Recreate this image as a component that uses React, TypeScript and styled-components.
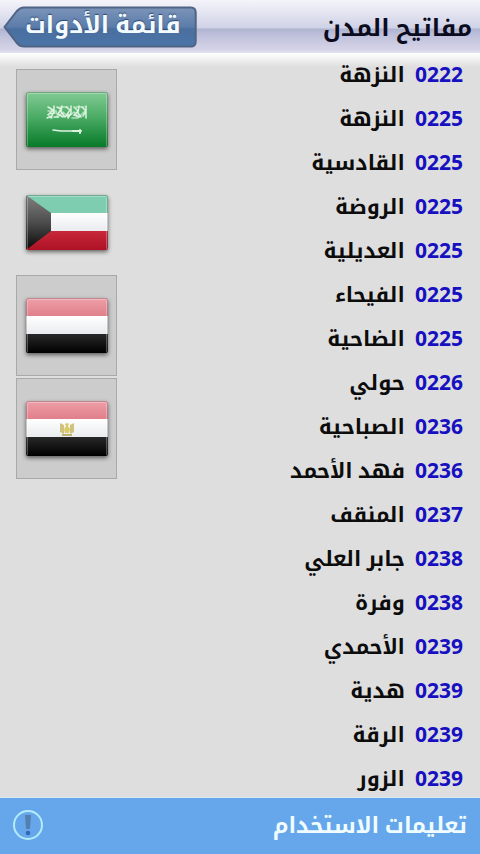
import React, { useId, useState } from "react";
import styled, { createGlobalStyle } from "styled-components";

const GlobalStyle = createGlobalStyle`
  * { box-sizing: border-box; }
  body {
    margin: 0;
    background: #dedede;
    font-family: "Noto Sans", "Noto Kufi Arabic", "DejaVu Sans", sans-serif;
    font-weight: 700;
  }
`;

const Screen = styled.div`
  display: flex;
  flex-direction: column;
  height: 100vh;
`;

const Header = styled.header`
  flex: none;
  display: flex;
  align-items: center;
  justify-content: space-between;
  height: 53px;
  padding: 0 8px 0 3px;
  direction: ltr;
  background: linear-gradient(#f4f4fa 0, #e2e3f0 14px, #cfd1e6 28px, #aeb3cf 29px, #bcbeda 34px, #d6d4e8 50px, #e4e2f0 53px);
`;

const Title = styled.h1`
  margin: 0;
  font-size: 24px;
  line-height: 52px;
  color: #0b0b20;
`;

const BackButton = styled.button`
  position: relative;
  height: 42px;
  padding: 0 16px 6px 22px;
  border: 0;
  background: none;
  font: inherit;
  font-size: 24px;
  line-height: 36px;
  color: #f4fbff;
  text-shadow: 0 -1px 1px #2c466f;
  cursor: pointer;
`;

const BackShape = styled.svg`
  position: absolute;
  inset: 0;
  width: 100%;
  height: 100%;
`;

const BackLabel = styled.span`
  position: relative;
`;

const Content = styled.main`
  flex: 1;
  min-height: 0;
  display: flex;
  justify-content: space-between;
  direction: ltr;
  overflow: hidden;
  background: linear-gradient(#ffffff 0, #f6f6f6 4px, #dedede 14px);
`;

const Countries = styled.nav`
  display: flex;
  flex-direction: column;
  gap: 2px;
  padding: 16px;
`;

const CountryButton = styled.button<{ $selected: boolean }>`
  display: grid;
  place-items: center;
  width: 101px;
  height: 101px;
  padding: 0;
  border: 1px solid ${(p) => (p.$selected ? "transparent" : "#a9a9a9")};
  background: ${(p) => (p.$selected ? "transparent" : "#cccccc")};
  cursor: pointer;
`;

const FlagDrawing = styled.svg`
  display: block;
  width: 82px;
  height: 55px;
  border-radius: 2px;
  box-shadow: 0 2px 4px rgba(0, 0, 0, 0.55);
`;

const CityList = styled.ul`
  flex: 1;
  margin: 0;
  padding: 0 17px 0 0;
  list-style: none;
  direction: rtl;
  overflow-y: auto;
  scrollbar-width: none;
`;

const CityRow = styled.li`
  display: flex;
  gap: 10px;
  height: 44px;
  font-size: 21px;
  line-height: 42px;
  white-space: nowrap;
`;

const Code = styled.span`
  color: #1610c0;
`;

const City = styled.span`
  color: #0c0c0c;
`;

const Footer = styled.footer`
  flex: none;
  display: flex;
  align-items: center;
  justify-content: space-between;
  height: 57px;
  padding: 0 13px;
  direction: ltr;
  background: #65a7ea;
  border-top: 1px solid #d8e8f4;
`;

const FooterLink = styled.a`
  padding-bottom: 4px;
  color: #f0fcff;
  font-size: 22px;
  line-height: 52px;
  text-decoration: none;
`;

const InfoButton = styled.button`
  display: block;
  padding: 0;
  border: 0;
  background: none;
  cursor: pointer;
`;

type Country = "sa" | "kw" | "ye" | "eg";

const countries: { id: Country; name: string }[] = [
  { id: "sa", name: "السعودية" },
  { id: "kw", name: "الكويت" },
  { id: "ye", name: "اليمن" },
  { id: "eg", name: "مصر" },
];

const cities: [string, string][] = [
  ["0222", "النزهة"],
  ["0225", "النزهة"],
  ["0225", "القادسية"],
  ["0225", "الروضة"],
  ["0225", "العديلية"],
  ["0225", "الفيحاء"],
  ["0225", "الضاحية"],
  ["0226", "حولي"],
  ["0236", "الصباحية"],
  ["0236", "فهد الأحمد"],
  ["0237", "المنقف"],
  ["0238", "جابر العلي"],
  ["0238", "وفرة"],
  ["0239", "الأحمدي"],
  ["0239", "هدية"],
  ["0239", "الرقة"],
  ["0239", "الزور"],
];

function Flag({ country }: { country: Country }) {
  const id = useId();
  const url = (name: string) => `url(#${id}${name})`;
  return (
    <FlagDrawing viewBox="0 0 82 55" aria-hidden="true">
      <defs>
        <linearGradient id={id + "green"} x2="0" y2="1">
          <stop offset="0" stopColor="#82cb94" />
          <stop offset=".45" stopColor="#4cac66" />
          <stop offset="1" stopColor="#077a28" />
        </linearGradient>
        <linearGradient id={id + "white"} x2="0" y2="1">
          <stop offset="0" stopColor="#ffffff" />
          <stop offset="1" stopColor="#e9ebee" />
        </linearGradient>
        <linearGradient id={id + "pink"} x2="0" y2="1">
          <stop offset="0" stopColor="#eda0a8" />
          <stop offset="1" stopColor="#e07f8b" />
        </linearGradient>
        <linearGradient id={id + "black"} x2="0" y2="1">
          <stop offset="0" stopColor="#282828" />
          <stop offset="1" stopColor="#000000" />
        </linearGradient>
        <linearGradient id={id + "hoist"} x2="0" y2="1">
          <stop offset="0" stopColor="#808080" />
          <stop offset=".5" stopColor="#4c4c4c" />
          <stop offset="1" stopColor="#080808" />
        </linearGradient>
        <linearGradient id={id + "red"} x2="0" y2="1">
          <stop offset="0" stopColor="#c8283a" />
          <stop offset="1" stopColor="#ad1224" />
        </linearGradient>
      </defs>
      {country === "sa" && (
        <>
          <path d="M0 0H82V55H0Z" fill={url("green")} />
          <g fill="none" stroke="#dcf3df" strokeWidth="1.5" strokeLinecap="round">
            <path d="M22 15l5 3-4 4 6-1M28 14v5l-3 7M31 15l4 2-3 5 5 3M36 14l-1 6 4 5M40 15l4 3-4 6 5-2M45 14v7l-3 5M48 15l4 4-4 4 5 2M53 14l-1 7 3 4M56 15l4 4-3 5M60 14v12M21 26l5-2M28 25h4" />
            <path d="M22 19h8l2 6 5-5 5 5 6-5 5 5 6-6M22 23l4 3M34 15h8M46 26h6M50 15h8" opacity=".7" />
            <path d="M27 38l8 1h14" />
            <path d="M47 39h8M54 38v3" strokeWidth="2" />
          </g>
        </>
      )}
      {country === "kw" && (
        <>
          <path d="M0 0H82V18H0Z" fill="#7fcdb1" />
          <path d="M0 18H82V36H0Z" fill={url("white")} />
          <path d="M0 36H82V55H0Z" fill={url("red")} />
          <path d="M0 0L25 18V36L0 55Z" fill={url("hoist")} />
        </>
      )}
      {(country === "ye" || country === "eg") && (
        <>
          <path d="M0 0H82V18H0Z" fill={url("pink")} />
          <path d="M0 18H82V36H0Z" fill={url("white")} />
          <path d="M0 36H82V55H0Z" fill={url("black")} />
        </>
      )}
      {country === "eg" && (
        <g fill="#cfc27e">
          <path d="M34 22l4 2v9l-4-2zM48 22l-4 2v9l4-2z" />
          <path d="M39 23l2-1 2 1-1 2 2 3-1 4h-4l-1-4 2-3z" fill="#dccb66" />
          <path d="M36 33h10v2H36z" fill="#bdb070" />
        </g>
      )}
      <path d="M1.500 54V3Q1.500 1.500 3 1.500H79Q80.500 1.500 80.500 3V54" fill="none" stroke="#fff" strokeOpacity=".28" />
      <path d="M.5 55V2Q.5 .5 2 .5H80Q81.500 .5 81.500 2V55" fill="none" stroke="#555" strokeOpacity=".3" />
    </FlagDrawing>
  );
}

export default function App() {
  const [selected, setSelected] = useState<Country>("kw");
  return (
    <Screen dir="rtl" lang="ar">
      <GlobalStyle />
      <Header>
        <BackButton type="button">
          <BackShape viewBox="0 0 194 42" preserveAspectRatio="none" aria-hidden="true">
            <defs>
              <linearGradient id="back-fill" x2="0" y2="1">
                <stop offset="0" stopColor="#7c94b9" />
                <stop offset=".5" stopColor="#5b7caa" />
                <stop offset=".55" stopColor="#4a6f9f" />
                <stop offset="1" stopColor="#4b74a8" />
              </linearGradient>
            </defs>
            <path
              d="M1.500 21L14 5Q17 1.500 21 1.500H188Q193 1.500 193 6.500V35.500Q193 40.500 188 40.500H21Q17 40.500 14 37Z"
              fill="url(#back-fill)"
              stroke="#4f6484"
              strokeWidth="2"
            />
          </BackShape>
          <BackLabel dir="rtl">قائمة الأدوات</BackLabel>
        </BackButton>
        <Title dir="rtl">مفاتيح المدن</Title>
      </Header>
      <Content>
        <Countries aria-label="الدول">
          {countries.map((c) => (
            <CountryButton
              key={c.id}
              type="button"
              aria-label={c.name}
              aria-pressed={selected === c.id}
              $selected={selected === c.id}
              onClick={() => setSelected(c.id)}
            >
              <Flag country={c.id} />
            </CountryButton>
          ))}
        </Countries>
        <CityList>
          {cities.map(([code, city]) => (
            <CityRow key={code + city}>
              <Code>{code}</Code>
              <City>{city}</City>
            </CityRow>
          ))}
        </CityList>
      </Content>
      <Footer>
        <InfoButton type="button" aria-label="معلومات">
          <svg width="30" height="30" viewBox="0 0 30 30" aria-hidden="true">
            <circle cx="15" cy="15" r="14" fill="none" stroke="#b4ecfc" strokeWidth="2" />
            <path d="M12 5h6l-1 14h-4z" fill="#557fae" />
            <circle cx="15" cy="23" r="2.300" fill="#3468b8" />
          </svg>
        </InfoButton>
        <FooterLink href="#help" dir="rtl">تعليمات الاستخدام</FooterLink>
      </Footer>
    </Screen>
  );
}
